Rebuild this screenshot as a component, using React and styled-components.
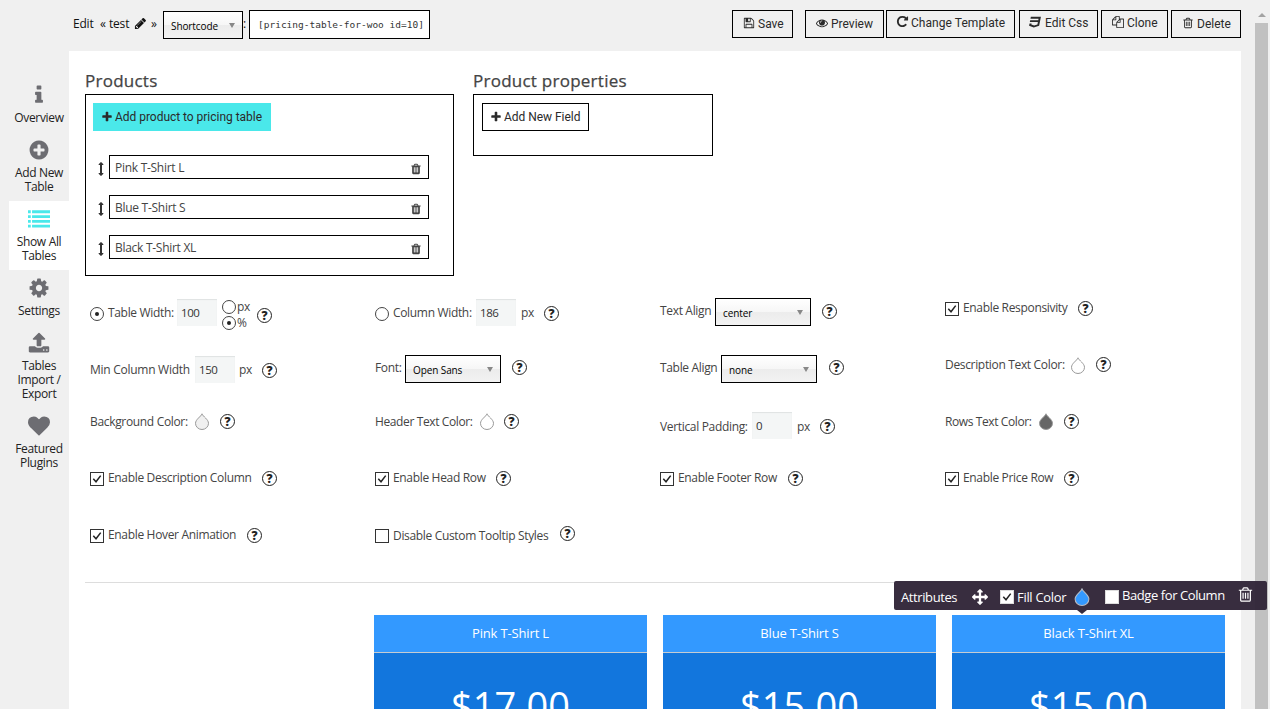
import React from "react";
import styled, { createGlobalStyle, css } from "styled-components";

const Global = createGlobalStyle`
  * { box-sizing: border-box; }
  html, body { margin: 0; padding: 0; background: #f0f0f0; overflow: hidden; }
  body { font-family: "Open Sans", "Noto Sans", sans-serif; font-size: 12px; color: #444; }
`;

const PATHS = {
  plus: "M1600 736v192q0 40-28 68t-68 28h-416v416q0 40-28 68t-68 28h-192q-40 0-68-28t-28-68v-416h-416q-40 0-68-28t-28-68v-192q0-40 28-68t68-28h416v-416q0-40 28-68t68-28h192q40 0 68 28t28 68v416h416q40 0 68 28t28 68z",
  trash: "M704 1376v-704q0-14-9-23t-23-9h-64q-14 0-23 9t-9 23v704q0 14 9 23t23 9h64q14 0 23-9t9-23zm256 0v-704q0-14-9-23t-23-9h-64q-14 0-23 9t-9 23v704q0 14 9 23t23 9h64q14 0 23-9t9-23zm256 0v-704q0-14-9-23t-23-9h-64q-14 0-23 9t-9 23v704q0 14 9 23t23 9h64q14 0 23-9t9-23zm-544-992h448l-48-117q-7-9-17-11h-317q-10 2-17 11zm928 32v64q0 14-9 23t-23 9h-96v948q0 83-47 143.5t-113 60.5h-832q-66 0-113-58.5t-47-141.5v-952h-96q-14 0-23-9t-9-23v-64q0-14 9-23t23-9h309l70-167q15-37 54-63t79-26h320q40 0 79 26t54 63l70 167h309q14 0 23 9t9 23z",
  trashO: "M704 736v576q0 14-9 23t-23 9h-64q-14 0-23-9t-9-23v-576q0-14 9-23t23-9h64q14 0 23 9t9 23zm256 0v576q0 14-9 23t-23 9h-64q-14 0-23-9t-9-23v-576q0-14 9-23t23-9h64q14 0 23 9t9 23zm256 0v576q0 14-9 23t-23 9h-64q-14 0-23-9t-9-23v-576q0-14 9-23t23-9h64q14 0 23 9t9 23zm128 724v-948h-896v948q0 22 7 40.5t14.5 27 10.5 8.5h832q3 0 10.5-8.5t14.5-27 7-40.5zm-672-1076h448l-48-117q-7-9-17-11h-317q-10 2-17 11zm928 32v64q0 14-9 23t-23 9h-96v948q0 83-47 143.5t-113 60.5h-832q-66 0-113-58.5t-47-141.5v-952h-96q-14 0-23-9t-9-23v-64q0-14 9-23t23-9h309l70-167q15-37 54-63t79-26h320q40 0 79 26t54 63l70 167h309q14 0 23 9t9 23z",
  eye: "M1664 960q-152-236-381-353 61 104 61 225 0 185-131.5 316.5t-316.5 131.5-316.5-131.5-131.5-316.5q0-121 61-225-229 117-381 353 133 205 333.5 326.5t434.5 121.5 434.5-121.5 333.5-326.5zm-720-384q0-20-14-34t-34-14q-125 0-214.5 89.5t-89.5 214.5q0 20 14 34t34 14 34-14 14-34q0-86 61-147t147-61q20 0 34-14t14-34zm848 384q0 34-20 69-140 230-376.5 368.5t-499.5 138.5-499.5-139-376.5-368q-20-35-20-69t20-69q140-229 376.5-368t499.5-139 499.5 139 376.5 368q20 35 20 69z",
  repeat: "M1664 256v448q0 26-19 45t-45 19h-448q-42 0-59-40-17-39 14-69l138-138q-148-137-349-137-104 0-198.5 40.5t-163.5 109.5-109.5 163.5-40.5 198.5 40.5 198.5 109.5 163.5 163.5 109.5 198.5 40.5q119 0 225-52t179-147q7-10 23-12 15 0 25 9l137 138q9 8 9.5 20.5t-7.5 22.5q-109 132-264 204.5t-327 72.5q-156 0-298-61t-245-164-164-245-61-298 61-298 164-245 245-164 298-61q147 0 284.5 55.5t244.5 156.5l130-129q29-31 70-14 39 17 39 59z",
  css3: "M275 128h1505l-266 1333-804 267-698-267 71-356h297l-29 147 422 161 486-161 68-339h-1208l58-297h1209l38-191h-1208z",
  floppy: "M512 1536h768v-384h-768v384zm896 0h128v-896q0-14-10-38.5t-20-34.5l-281-281q-10-10-34-20t-39-10v416q0 40-28 68t-68 28h-576q-40 0-68-28t-28-68v-416h-128v1280h128v-416q0-40 28-68t68-28h832q40 0 68 28t28 68v416zm-384-928v-320q0-13-9.5-22.5t-22.5-9.5h-192q-13 0-22.5 9.5t-9.5 22.5v320q0 13 9.5 22.5t22.5 9.5h192q13 0 22.5-9.5t9.5-22.5zm640 32v928q0 40-28 68t-68 28h-1344q-40 0-68-28t-28-68v-1344q0-40 28-68t68-28h928q40 0 88 20t76 48l280 280q28 28 48 76t20 88z",
  files: "M1696 384q40 0 68 28t28 68v1216q0 40-28 68t-68 28h-960q-40 0-68-28t-28-68v-288h-544q-40 0-68-28t-28-68v-672q0-40 20-88t48-76l408-408q28-28 76-48t88-20h416q40 0 68 28t28 68v328q68-40 128-40h416zm-544 213l-299 299h299v-299zm-640-384l-299 299h299v-299zm196 647l316-316v-416h-384v416q0 40-28 68t-68 28h-416v640h512v-256q0-40 20-88t48-76zm956 804v-1152h-384v416q0 40-28 68t-68 28h-416v640h896z",
  pencil: "M491 1536l91-91-235-235-91 91v107h128v128h107zm523-928q0-22-22-22-10 0-17 7l-542 542q-7 7-7 17 0 22 22 22 10 0 17-7l542-542q7-7 7-17zm-54-192l416 416-832 832h-416v-416zm683 96q0 53-37 90l-166 166-416-416 166-165q36-38 90-38 53 0 91 38l235 234q37 39 37 91z",
  info: "M1216 1344v128q0 26-19 45t-45 19h-512q-26 0-45-19t-19-45v-128q0-26 19-45t45-19h64v-384h-64q-26 0-45-19t-19-45v-128q0-26 19-45t45-19h384q26 0 45 19t19 45v576h64q26 0 45 19t19 45zm-128-1152v192q0 26-19 45t-45 19h-256q-26 0-45-19t-19-45v-192q0-26 19-45t45-19h256q26 0 45 19t19 45z",
  plusCircle: "M1344 960v-128q0-26-19-45t-45-19h-256v-256q0-26-19-45t-45-19h-128q-26 0-45 19t-19 45v256h-256q-26 0-45 19t-19 45v128q0 26 19 45t45 19h256v256q0 26 19 45t45 19h128q26 0 45-19t19-45v-256h256q26 0 45-19t19-45zm320-64q0 209-103 385.5t-279.5 279.5-385.5 103-385.5-103-279.5-279.5-103-385.5 103-385.5 279.5-279.5 385.5-103 385.5 103 279.5 279.5 103 385.5z",
  list: "M0 192h224v230h-224zM330 192h1462v230h-1462zM0 582h224v230h-224zM330 582h1462v230h-1462zM0 972h224v230h-224zM330 972h1462v230h-1462zM0 1362h224v230h-224zM330 1362h1462v230h-1462z",
  cog: "M1152 896q0-106-75-181t-181-75-181 75-75 181 75 181 181 75 181-75 75-181zm512-109v222q0 12-8 23t-20 13l-185 28q-19 54-39 91 35 50 107 138 10 12 10 25t-9 23q-27 37-99 108t-94 71q-12 0-26-9l-138-108q-44 23-91 38-16 136-29 186-7 28-36 28h-222q-14 0-24.5-8.5t-11.5-21.5l-28-184q-49-16-90-37l-141 107q-10 9-25 9-14 0-25-11-126-114-165-168-7-10-7-23 0-12 8-23 15-21 51-66.5t54-70.5q-27-50-41-99l-183-27q-13-2-21-12.5t-8-23.5v-222q0-12 8-23t19-13l186-28q14-46 39-92-40-57-107-138-10-12-10-24 0-10 9-23 26-36 98.5-107.5t94.5-71.5q13 0 26 10l138 107q44-23 91-38 16-136 29-186 7-28 36-28h222q14 0 24.5 8.5t11.5 21.5l28 184q49 16 90 37l142-107q9-9 24-9 13 0 25 10 129 119 165 170 7 8 7 22 0 12-8 23-15 21-51 66.5t-54 70.5q26 50 41 98l183 28q13 2 21 12.5t8 23.5z",
  upload: "M1344 1472q0-26-19-45t-45-19-45 19-19 45 19 45 45 19 45-19 19-45zm256 0q0-26-19-45t-45-19-45 19-19 45 19 45 45 19 45-19 19-45zm128-224v320q0 40-28 68t-68 28h-1472q-40 0-68-28t-28-68v-320q0-40 28-68t68-28h427q21 56 70.5 92t110.5 36h256q61 0 110.5-36t70.5-92h427q40 0 68 28t28 68zm-325-648q-17 40-59 40h-256v448q0 26-19 45t-45 19h-256q-26 0-45-19t-19-45v-448h-256q-42 0-59-40-17-39 14-69l448-448q18-19 45-19t45 19l448 448q31 30 14 69z",
  heart: "M896 1664q-26 0-44-18l-624-602q-10-8-27.5-26t-55.5-65.5-68-97.5-53.5-121-23.5-138q0-220 127-344t351-124q62 0 126.5 21.5t120 58 95.5 68.5 76 68q36-36 76-68t95.5-68.5 120-58 126.5-21.5q224 0 351 124t127 344q0 221-229 450l-623 600q-18 18-44 18z",
  arrowsV: "M1216 320q0 26-19 45t-45 19h-128v1024h128q26 0 45 19t19 45-19 45l-256 256q-19 19-45 19t-45-19l-256-256q-19-19-19-45t19-45 45-19h128v-1024h-128q-26 0-45-19t-19-45 19-45l256-256q19-19 45-19t45 19l256 256q19 19 19 45z",
  arrows: "M1792 896q0 26-19 45l-256 256q-19 19-45 19t-45-19-19-45v-128h-384v384h128q26 0 45 19t19 45-19 45l-256 256q-19 19-45 19t-45-19l-256-256q-19-19-19-45t19-45 45-19h128v-384h-384v128q0 26-19 45t-45 19-45-19l-256-256q-19-19-19-45t19-45l256-256q19-19 45-19t45 19 19 45v128h384v-384h-128q-26 0-45-19t-19-45 19-45l256-256q19-19 45-19t45 19l256 256q19 19 19 45t-19 45-45 19h-128v384h384v-128q0-26 19-45t45-19 45 19l256 256q19 19 19 45z",
};

const place = css`
  flex: none;
  margin-left: ${(p) => p.$l || 0}px;
  margin-top: ${(p) => p.$t || 0}px;
`;

const Svg = styled.svg`
  ${place}
  display: block;
  width: ${(p) => p.$size}px;
  height: ${(p) => p.$size}px;
  fill: currentColor;
  overflow: visible;
`;
const Icon = ({ name, size = 13, l, t }) => (
  <Svg viewBox="0 0 1792 1792" $size={size} $l={l} $t={t}><path d={PATHS[name]} /></Svg>
);

const Text = styled.span`
  ${place}
  width: ${(p) => (p.$w ? p.$w + "px" : "auto")};
  line-height: 18px;
  white-space: nowrap;
  font-size: ${(p) => p.$fs || 12}px;
  letter-spacing: ${(p) => p.$ls ?? -0.33}px;
`;

const Page = styled.div`
  display: flex;
  width: 1270px;
  height: 709px;
  overflow: hidden;
`;
const Frame = styled.div`
  width: 1241px;
  flex: none;
  display: flex;
  flex-direction: column;
`;
const Header = styled.header`
  display: flex;
  align-items: flex-start;
  height: 51px;
  flex: none;
  padding: 10px 0 0 72px;
  color: #111;
`;
const Spacer = styled.div`flex: 1;`;

const SelectBox = styled.div`
  ${place}
  display: flex;
  align-items: center;
  justify-content: space-between;
  width: ${(p) => p.$w}px;
  height: 28px;
  padding: 1px 6px 0 7px;
  border: 1px solid #000;
  background: linear-gradient(#fff 0%, #f6f6f6 50%, #ececec 52%, #f2f2f2 100%);
  font-size: 10px;
  letter-spacing: -0.1px;
  color: #000;
`;
const Caret = styled.i`
  border: 3px solid transparent;
  border-top: 5px solid #888;
  border-bottom: 0;
  margin: -1px 1px 0 0;
`;
const Select = ({ w = 96, l, t, children }) => (
  <SelectBox $w={w} $l={l} $t={t}><span>{children}</span><Caret /></SelectBox>
);
const CodeBox = styled.code`
  ${place}
  width: 181px;
  height: 29px;
  border: 1px solid #000;
  background: #fff;
  padding-left: 8px;
  font: 9.5px/28px "DejaVu Sans Mono", "Liberation Mono", monospace;
  color: #333;
  white-space: nowrap;
`;
const ToolButton = styled.button`
  ${place}
  display: flex;
  align-items: flex-start;
  width: ${(p) => p.$w}px;
  height: 28px;
  padding: ${(p) => p.$pt ?? 4}px 0 0 ${(p) => p.$pl ?? 10}px;
  border: ${(p) => (p.$accent ? 0 : 1)}px solid #000;
  background: ${(p) => (p.$accent ? "#4ae8ea" : "transparent")};
  font-family: Roboto, sans-serif;
  color: #2a2a2a;
`;

const Body = styled.div`
  display: flex;
  flex: 1;
  min-height: 0;
`;
const Sidebar = styled.nav`
  width: 69px;
  flex: none;
  padding: 26px 0 0 9px;
`;
const NavItem = styled.a`
  display: flex;
  flex-direction: column;
  align-items: center;
  padding: 7px 0;
  background: ${(p) => (p.$active ? "#fff" : "transparent")};
  color: ${(p) => (p.$active ? "#4ae8ea" : "#6d6d72")};
`;
const NavText = styled.span`
  margin-top: 5px;
  font-size: 12px;
  line-height: 14px;
  letter-spacing: -0.33px;
  text-align: center;
  white-space: pre-line;
  color: #222;
`;

const Panel = styled.main`
  flex: 1;
  min-width: 0;
  background: #fff;
  padding: 19px 16px 0;
  display: flex;
  flex-direction: column;
`;
const Groups = styled.div`
  display: flex;
  height: 229px;
  flex: none;
  gap: 19px;
  align-items: flex-start;
`;
const Title = styled.h3`
  margin: 0;
  height: 24px;
  line-height: 21px;
  font-size: 17px;
  font-weight: 500;
  letter-spacing: 0.25px;
  -webkit-text-stroke: 0.25px #444;
  color: #444;
`;
const Box = styled.section`
  width: ${(p) => p.$w}px;
  height: ${(p) => p.$h}px;
  border: 1px solid #000;
  padding: 8px 0 0 ${(p) => p.$pl}px;
`;
const ProductList = styled.div`
  display: flex;
  flex-direction: column;
  gap: 16px;
  margin-top: 24px;
`;
const ProductRow = styled.div`
  display: flex;
  align-items: flex-start;
  color: #333;
`;
const ProductField = styled.div`
  display: flex;
  align-items: flex-start;
  justify-content: space-between;
  width: 320px;
  height: 24px;
  margin-left: 1px;
  border: 1px solid #000;
  padding: 3px 6px 0 5px;
  color: #444;
`;

const Settings = styled.div`
  display: grid;
  grid-template-columns: repeat(4, 285px);
  grid-template-rows: 57px 56px 57px 57px 56px;
  padding-left: 5px;
  flex: none;
`;
const Cell = styled.div`
  display: flex;
  align-items: flex-start;
`;
const NumberBox = styled.span`
  ${place}
  width: 40px;
  height: 27px;
  padding-left: 4px;
  line-height: 28px;
  background: #f4f6f6;
  box-shadow: inset 0 1px 1px #dfe3e3;
  font-size: 11.5px;
  letter-spacing: -0.4px;
  color: #333;
`;
const RadioRing = styled.span`
  ${place}
  display: grid;
  place-items: center;
  width: 14px;
  height: 14px;
  border: 1px solid #444;
  border-radius: 50%;
  background: #fff;
  &::after {
    content: "";
    width: 4px;
    height: 4px;
    border-radius: 50%;
    background: ${(p) => (p.$on ? "#222" : "transparent")};
  }
`;
const UnitPicker = styled.div`
  margin: 1px 0 0 5px;
  width: 27px;
  display: flex;
  flex-direction: column;
  gap: 2px;
`;
const UnitOption = styled.div`
  display: flex;
  align-items: center;
  height: 14px;
`;
const CheckSquare = styled.span`
  ${place}
  display: grid;
  place-items: center;
  width: 14px;
  height: 14px;
  border: 1px solid ${(p) => (p.$light ? "#ddd" : "#333")};
  background: #fff;
`;
const Check = ({ on, l, t, light }) => (
  <CheckSquare $l={l} $t={t} $light={light}>
    {on && <svg width="10" height="10" viewBox="0 0 10 10"><path d="M1.3 4.8L4 7.8L8.7 1.6" fill="none" stroke="#222" strokeWidth="1.5" /></svg>}
  </CheckSquare>
);
const HelpRing = styled.span`
  ${place}
  display: grid;
  place-items: center;
  width: 15px;
  height: 15px;
  border: 1.4px solid #222;
  border-radius: 50%;
  font: 800 12px/12px "Open Sans", sans-serif;
  color: #222;
`;
const Help = ({ l = 11, t = 2 }) => <HelpRing $l={l} $t={t}>?</HelpRing>;
const DropSvg = styled.svg`
  ${place}
  display: block;
`;
const Drop = ({ l = 7, t = 1, fill = "#fff", stroke = "#999", w = 14, h = 17 }) => (
  <DropSvg $l={l} $t={t} width={w} height={h} viewBox="0 0 14 17">
    <path d="M7 0.8C6 3.6 0.5 6.4 0.5 10.3a6.5 6.2 0 0 0 13 0C13.5 6.4 8 3.6 7 0.8z" fill={fill} stroke={stroke} />
  </DropSvg>
);
const CheckCell = ({ label, w, on = true, ct = 3, tt = 0, ht = 2 }) => (
  <Cell>
    <Check on={on} t={ct} />
    <Text $l={4} $t={tt} $w={w}>{label}</Text>
    <Help t={ht} />
  </Cell>
);

const Preview = styled.section`
  border-top: 1px solid #ddd;
  height: 127px;
  padding: 32px 0 0 289px;
  display: flex;
  gap: 16px;
  overflow: hidden;
`;
const PriceColumn = styled.div`
  width: 273px;
  height: 160px;
  flex: none;
  background: #1276dd;
  color: #fff;
  text-align: center;
`;
const PriceHead = styled.div`
  height: 38px;
  line-height: 37px;
  background: #3399ff;
  border-bottom: 1px solid #c6ccd2;
  font-size: 13px;
  letter-spacing: -0.15px;
`;
const Price = styled.div`
  padding-top: 25px;
  font-size: 38px;
  line-height: 54px;
  letter-spacing: 0.1px;
`;

const AttributeBar = styled.div`
  position: absolute;
  left: 894px;
  top: 581px;
  width: 373px;
  height: 29px;
  display: flex;
  align-items: flex-start;
  padding-left: 7px;
  border-radius: 2px;
  background: rgba(50, 38, 57, 0.97);
  color: #fff;
  &::after {
    content: "";
    position: absolute;
    left: 183px;
    top: 29px;
    border: 5px solid transparent;
    border-top: 4px solid #372c3e;
    border-bottom: 0;
  }
`;

const ScrollTrack = styled.div`
  flex: none;
  width: 29px;
  padding: 13px 2px 0 14px;
  display: flex;
  flex-direction: column;
  align-items: center;
`;
const ScrollArrow = styled.i`
  border: 4px solid transparent;
  border-bottom: 4px solid #a3a3a3;
  border-top: 0;
  margin-bottom: 6px;
`;
const ScrollThumb = styled.div`
  width: 13px;
  flex: 1;
  background: #c1c1c1;
`;

const NAV = [
  ["info", "Overview"],
  ["plusCircle", "Add New\nTable"],
  ["list", "Show All\nTables", true],
  ["cog", "Settings"],
  ["upload", "Tables\nImport /\nExport"],
  ["heart", "Featured\nPlugins"],
];

export default function App() {
  return (
    <>
      <Global />
      <Page>
        <Frame>
          <Header>
            <Text $l={1} $t={5} $w={27} $ls={-0.2}>Edit</Text>
            <Text $t={5} $w={9}>«</Text>
            <Text $t={5} $w={25} $ls={-0.2}>test</Text>
            <Icon name="pencil" size={13} t={7} />
            <Text $l={4} $t={5} $w={12}>»</Text>
            <Select w={80} t={1}>Shortcode</Select>
            <Text $t={5} $w={6}>:</Text>
            <CodeBox>[pricing-table-for-woo id=10]</CodeBox>
            <Spacer />
            <ToolButton $w={61}><Icon name="floppy" size={12} t={2} /><Text $l={3} $ls={0}>Save</Text></ToolButton>
            <ToolButton $w={79} $l={12}><Icon name="eye" size={12} t={2} /><Text $l={3} $ls={0}>Preview</Text></ToolButton>
            <ToolButton $w={129} $l={2} $pt={3} $pl={9}><Icon name="repeat" size={13} t={1} /><Text $l={2} $ls={0.05}>Change Template</Text></ToolButton>
            <ToolButton $w={79} $l={4} $pt={3} $pl={9}><Icon name="css3" size={12} t={2} /><Text $l={4} $ls={0}>Edit Css</Text></ToolButton>
            <ToolButton $w={67} $l={3} $pt={3}><Icon name="files" size={12} t={2} /><Text $l={3} $ls={0}>Clone</Text></ToolButton>
            <ToolButton $w={70} $l={3}><Icon name="trashO" size={12} t={2} /><Text $l={3} $ls={0}>Delete</Text></ToolButton>
          </Header>
          <Body>
            <Sidebar>
              {NAV.map(([icon, label, active]) => (
                <NavItem key={icon} $active={active}>
                  <Icon name={icon} size={22} />
                  <NavText>{label}</NavText>
                </NavItem>
              ))}
            </Sidebar>
            <Panel>
              <Groups>
                <div>
                  <Title>Products</Title>
                  <Box $w={369} $h={182} $pl={7}>
                    <ToolButton $accent $w={178} $pl={8} $pt={5}><Icon name="plus" size={12} t={3} /><Text $l={2} $ls={-0.03}>Add product to pricing table</Text></ToolButton>
                    <ProductList>
                      {["Pink T-Shirt L", "Blue T-Shirt S", "Black T-Shirt XL"].map((name) => (
                        <ProductRow key={name}>
                          <Icon name="arrowsV" size={14} t={7} l={1} />
                          <ProductField><Text $ls={-0.28}>{name}</Text><Icon name="trash" size={12} t={4} /></ProductField>
                        </ProductRow>
                      ))}
                    </ProductList>
                  </Box>
                </div>
                <div>
                  <Title>Product properties</Title>
                  <Box $w={240} $h={62} $pl={8}>
                    <ToolButton $w={107} $pl={7} $pt={4}><Icon name="plus" size={12} t={3} /><Text $l={2} $ls={-0.03}>Add New Field</Text></ToolButton>
                  </Box>
                </div>
              </Groups>

              <Settings>
                <Cell>
                  <RadioRing $on $t={8} />
                  <Text $l={4} $t={5} $w={65}>Table Width:</Text>
                  <NumberBox $l={4}>100</NumberBox>
                  <UnitPicker>
                    <UnitOption><RadioRing /><Text $l={1}>px</Text></UnitOption>
                    <UnitOption><RadioRing $on /><Text $l={1}>%</Text></UnitOption>
                  </UnitPicker>
                  <Help l={8} t={9} />
                </Cell>
                <Cell>
                  <RadioRing $t={8} />
                  <Text $l={4} $t={5} $w={79}>Column Width:</Text>
                  <NumberBox $l={4}>186</NumberBox>
                  <Text $l={5} $t={5} $w={12}>px</Text>
                  <Help t={7} />
                </Cell>
                <Cell>
                  <Text $t={3} $w={52}>Text Align</Text>
                  <Select l={3} t={-1}>center</Select>
                  <Help t={5} />
                </Cell>
                <CheckCell label="Enable Responsivity" w={104} ht={2} />

                <Cell>
                  <Text $t={5} $w={100} $ls={-0.27}>Min Column Width</Text>
                  <NumberBox $l={5}>150</NumberBox>
                  <Text $l={4} $t={5} $w={12}>px</Text>
                  <Help t={7} />
                </Cell>
                <Cell>
                  <Text $t={3} $w={27}>Font:</Text>
                  <Select l={3} t={-1}>Open Sans</Select>
                  <Help t={4} />
                </Cell>
                <Cell>
                  <Text $t={3} $w={58}>Table Align</Text>
                  <Select l={3} t={-1}>none</Select>
                  <Help l={12} t={4} />
                </Cell>
                <Cell>
                  <Text $w={119}>Description Text Color:</Text>
                  <Drop />
                  <Help t={1} />
                </Cell>

                <Cell>
                  <Text $t={1} $w={98}>Background Color:</Text>
                  <Drop fill="#f0f0f0" />
                  <Help t={2} />
                </Cell>
                <Cell>
                  <Text $t={1} $w={97} $ls={-0.38}>Header Text Color:</Text>
                  <Drop l={8} />
                  <Help l={10} t={2} />
                </Cell>
                <Cell>
                  <Text $t={6} $w={88}>Vertical Padding:</Text>
                  <NumberBox $l={4}>0</NumberBox>
                  <Text $l={5} $t={6} $w={12}>px</Text>
                  <Help t={7} />
                </Cell>
                <Cell>
                  <Text $t={1} $w={86} $ls={-0.4}>Rows Text Color:</Text>
                  <Drop l={8} fill="#666" />
                  <Help t={2} />
                </Cell>

                <CheckCell label="Enable Description Column" w={143} />
                <CheckCell label="Enable Head Row" w={92} />
                <CheckCell label="Enable Footer Row" w={99} />
                <CheckCell label="Enable Price Row" w={90} />

                <CheckCell label="Enable Hover Animation" w={128} />
                <CheckCell label="Disable Custom Tooltip Styles" w={156} on={false} tt={1} ht={0} />
              </Settings>

              <Preview>
                {[["Pink T-Shirt L", "$17.00"], ["Blue T-Shirt S", "$15.00"], ["Black T-Shirt XL", "$15.00"]].map(([name, price]) => (
                  <PriceColumn key={name}>
                    <PriceHead>{name}</PriceHead>
                    <Price>{price}</Price>
                  </PriceColumn>
                ))}
              </Preview>
            </Panel>
          </Body>
        </Frame>
        <ScrollTrack><ScrollArrow /><ScrollThumb /></ScrollTrack>
      </Page>
      <AttributeBar>
        <Text $t={7} $w={56} $fs={13} $ls={-0.4}>Attributes</Text>
        <Icon name="arrows" size={16} l={15} t={8} />
        <Check on light l={12} t={9} />
        <Text $l={3} $t={7} $w={50} $fs={13} $ls={-0.3}>Fill Color</Text>
        <Drop l={7} t={7} w={16} h={18} fill="#3399ff" stroke="#b9bcc4" />
        <Check light l={15} t={9} />
        <Text $l={3} $t={5} $w={103} $fs={13} $ls={-0.42}>Badge for Column</Text>
        <Icon name="trashO" size={17} l={12} t={5} />
      </AttributeBar>
    </>
  );
}
